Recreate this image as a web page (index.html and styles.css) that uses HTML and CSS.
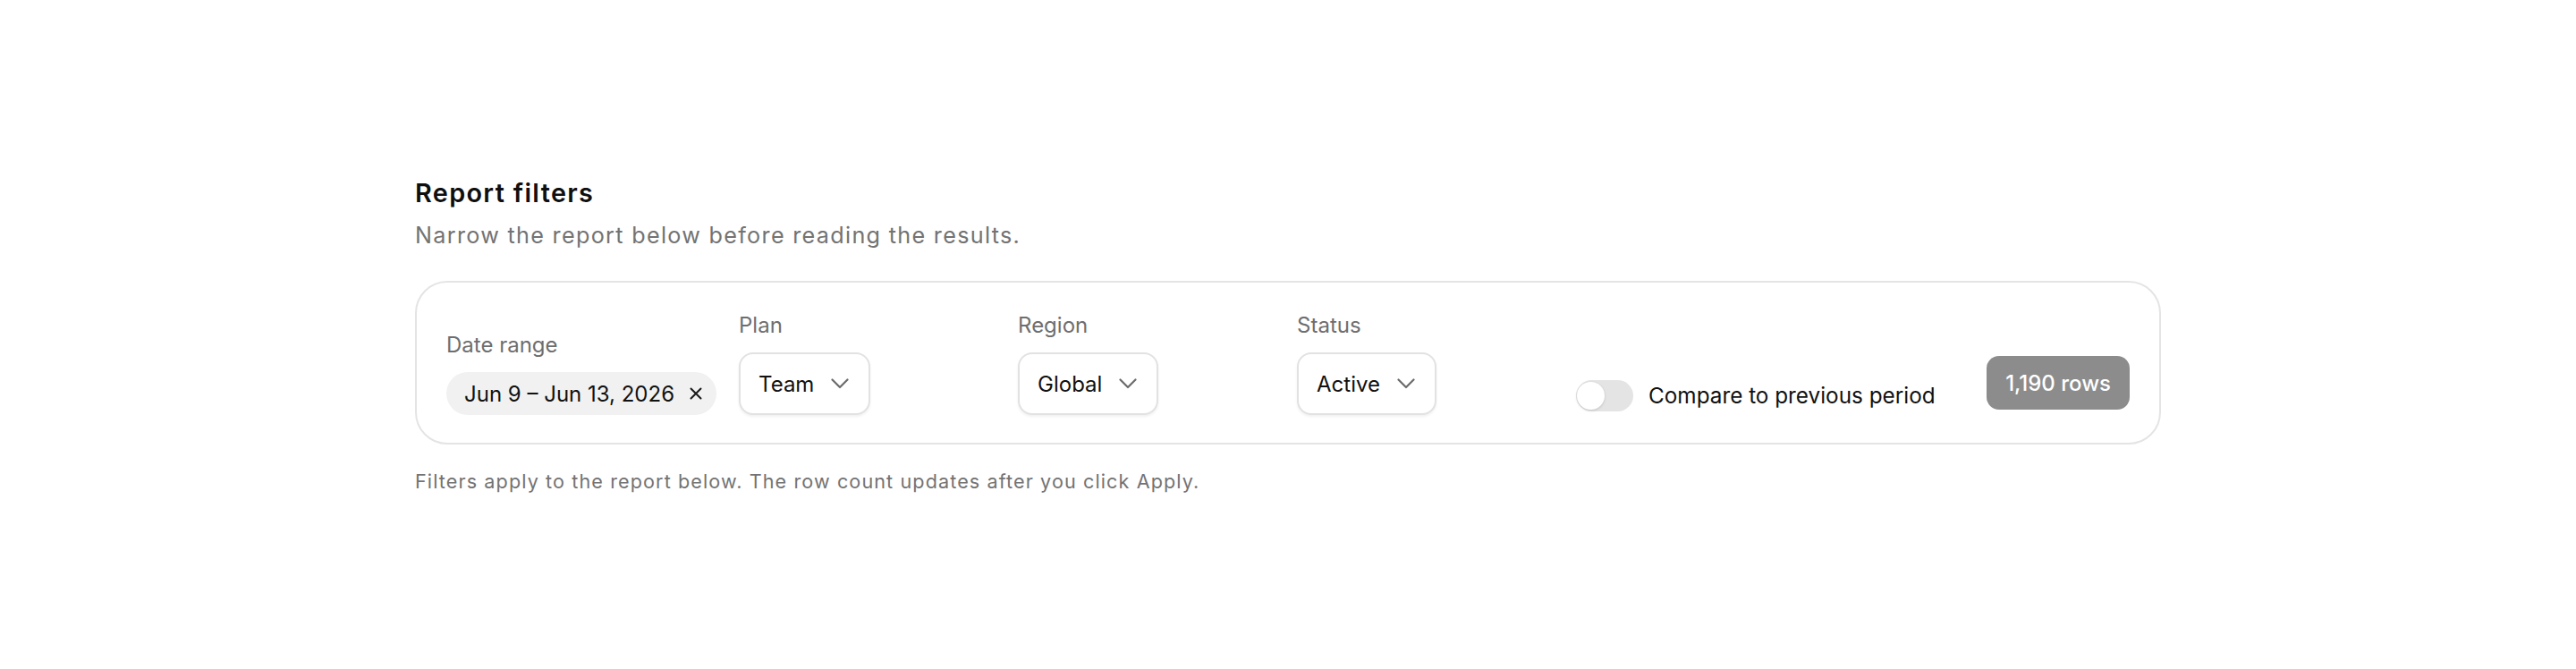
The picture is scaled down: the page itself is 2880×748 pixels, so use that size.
FILE: index.html
```html
<!DOCTYPE html>
<html lang="en">
<head>
<meta charset="utf-8">
<title>Report filters</title>
<link rel="stylesheet" href="styles.css">
</head>
<body>
<main class="page">
  <h1 class="title">Report filters</h1>
  <p class="subtitle">Narrow the report below before reading the results.</p>

  <section class="panel">
    <div class="field">
      <span class="label">Date range</span>
      <span class="chip">Jun 9 – Jun 13, 2026
        <svg class="chip-x" width="14" height="14" viewBox="0 0 14 14"><path d="M1.5 1.5l11 11M12.5 1.5l-11 11" fill="none" stroke="#1a1a1a" stroke-width="2" stroke-linecap="round"/></svg>
      </span>
    </div>
    <div class="field">
      <span class="label">Plan</span>
      <span class="select">Team
        <svg class="chev" width="20" height="12" viewBox="0 0 20 12"><path d="M1.5 1.5l8.5 8.5 8.5-8.5" fill="none" stroke="#6b6b6b" stroke-width="2.2" stroke-linecap="round" stroke-linejoin="round"/></svg>
      </span>
    </div>
    <div class="field">
      <span class="label">Region</span>
      <span class="select">Global
        <svg class="chev" width="20" height="12" viewBox="0 0 20 12"><path d="M1.5 1.5l8.5 8.5 8.5-8.5" fill="none" stroke="#6b6b6b" stroke-width="2.2" stroke-linecap="round" stroke-linejoin="round"/></svg>
      </span>
    </div>
    <div class="field">
      <span class="label">Status</span>
      <span class="select">Active
        <svg class="chev" width="20" height="12" viewBox="0 0 20 12"><path d="M1.5 1.5l8.5 8.5 8.5-8.5" fill="none" stroke="#6b6b6b" stroke-width="2.2" stroke-linecap="round" stroke-linejoin="round"/></svg>
      </span>
    </div>
    <label class="toggle-row">
      <span class="toggle"><span class="knob"></span></span>
      <span class="toggle-text">Compare to previous period</span>
    </label>
    <span class="badge">1,190 rows</span>
  </section>

  <p class="note">Filters apply to the report below. The row count updates after you click Apply.</p>
</main>
</body>
</html>
```

FILE: styles.css
```css
* { box-sizing: border-box; }
html, body { margin: 0; padding: 0; background: #ffffff; }
body {
  font-family: Inter, "Noto Sans", "Liberation Sans", sans-serif;
  color: #111111;
}
.page {
  width: 1952px;
  margin: 0 auto;
  padding-top: 198px;
}
.title {
  margin: 0;
  font-size: 28.8px;
  line-height: 36px;
  font-weight: 600;
  letter-spacing: 1.35px;
  color: #0f0f0f;
}
.subtitle {
  margin: 12px 0 0;
  font-size: 25.2px;
  line-height: 35px;
  letter-spacing: 1.3px;
  color: #737373;
}
.panel {
  margin-top: 33px;
  border: 2px solid #e4e4e4;
  border-radius: 36px;
  padding: 0 33px 31px 33px;
  height: 183px;
  display: flex;
  align-items: flex-end;
  gap: 25px;
}
.field {
  display: flex;
  flex-direction: column;
  align-items: flex-start;
  gap: 14px;
  min-width: 287px;
}
.label {
  font-size: 24px;
  line-height: 32px;
  color: #6e6e6e;
}
.chip {
  display: inline-flex;
  align-items: center;
  height: 48px;
  padding: 0 16px 0 20px;
  gap: 17px;
  border-radius: 24px;
  background: #f1f1f1;
  font-size: 24px;
  color: #111;
  white-space: nowrap;
}
.select {
  display: inline-flex;
  align-items: center;
  height: 70px;
  padding: 0 22px 0 20px;
  gap: 19px;
  border: 2px solid #e2e2e2;
  border-radius: 16px;
  background: #fff;
  box-shadow: 0 2px 3px rgba(0, 0, 0, 0.06);
  font-size: 24px;
  color: #111;
}
.toggle-row {
  display: flex;
  align-items: center;
  gap: 17px;
  height: 44px;
}
.toggle {
  position: relative;
  width: 64px;
  height: 35px;
  border-radius: 18px;
  background: #e4e4e4;
}
.knob {
  position: absolute;
  left: 1px;
  top: 2px;
  width: 31px;
  height: 31px;
  border-radius: 50%;
  background: #fff;
  box-shadow: 0 1px 3px rgba(0, 0, 0, 0.15);
}
.toggle-text {
  font-size: 24.3px;
  color: #111;
}
.badge {
  margin-left: auto;
  margin-bottom: 6px;
  display: inline-flex;
  align-items: center;
  height: 60px;
  padding: 0 21px;
  border-radius: 14px;
  background: #8c8c8c;
  color: #fff;
  font-size: 24px;
  font-weight: 500;
}
.note {
  margin: 26px 0 0;
  font-size: 21.6px;
  line-height: 30px;
  letter-spacing: 1.1px;
  color: #737373;
}
```
